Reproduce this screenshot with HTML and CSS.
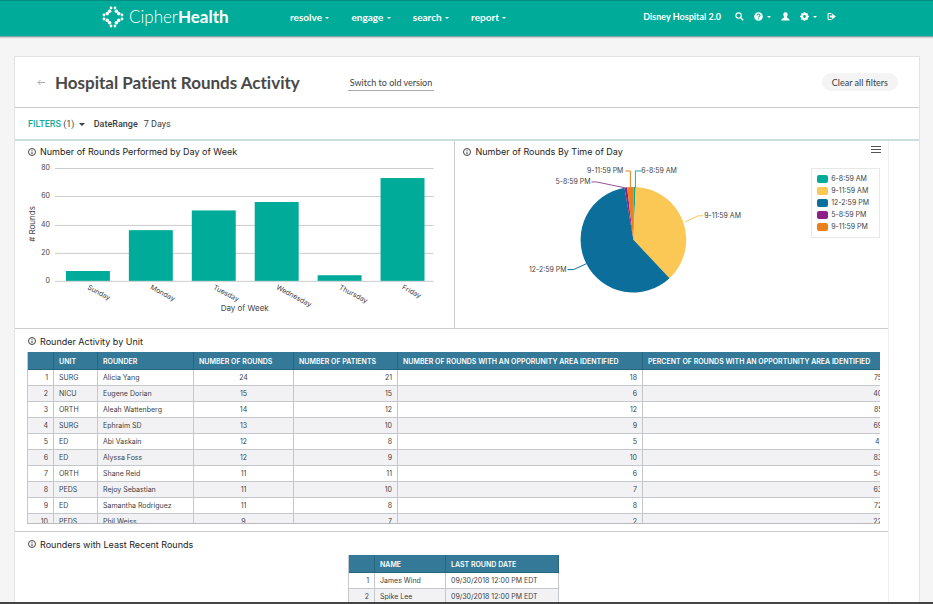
FILE: index.html
```
<!DOCTYPE html>
<html lang="en">
<head>
    <meta charset="UTF-8">
    <meta name="viewport" content="width=device-width, initial-scale=1.0">
    <title>Hospital Patient Rounds Activity</title>
    <link rel="stylesheet" href="styles.css">
</head>
<body>
    <header class="topbar">
        <a href="#" class="logo">
            <svg width="22" height="22" viewBox="0 0 22 22" fill="#fff">
                <g id="arm">
                    <circle cx="9" cy="2" r="1.4"/>
                    <circle cx="13" cy="2" r="1.4"/>
                    <circle cx="7.6" cy="5.300" r="1.800"/>
                    <circle cx="14.4" cy="5.300" r="1.800"/>
                </g>
                <use href="#arm" transform="rotate(90 11 11)"/>
                <use href="#arm" transform="rotate(180 11 11)"/>
                <use href="#arm" transform="rotate(270 11 11)"/>
            </svg>
            <span>Cipher<b>Health</b></span>
        </a>
        <nav class="menu">
            <a href="#">resolve <i class="caret"></i></a>
            <a href="#">engage <i class="caret"></i></a>
            <a href="#">search <i class="caret"></i></a>
            <a href="#">report <i class="caret"></i></a>
        </nav>
        <div class="tools">
            <span class="site">Disney Hospital 2.0</span>
            <a href="#" aria-label="Search"><svg width="9" height="9" viewBox="0 0 9 9"><circle cx="3.6" cy="3.6" r="2.7" fill="none" stroke="#fff" stroke-width="1.1"/><path d="M5.6 5.6L8.2 8.2" stroke="#fff" stroke-width="1.5"/></svg></a>
            <a href="#" aria-label="Help"><svg width="9" height="9" viewBox="0 0 9 9"><circle cx="4.5" cy="4.5" r="4.3" fill="#fff"/><path d="M3 3.5C3 1.600 6 1.600 6 3.400C6 4.400 4.600 4.300 4.600 5.500M4.600 6.200V7.200" fill="none" stroke="#00ac99" stroke-width="1.1"/></svg><i class="caret"></i></a>
            <a href="#" aria-label="Account"><svg width="9" height="9" viewBox="0 0 9 9"><path d="M4.500 .3C6.300 .3 6.700 1.500 6.600 2.900C6.500 4 5.900 4.500 5.900 5.300C5.900 6.300 8.700 6.300 8.700 8.500H.3C.3 6.300 3.100 6.300 3.100 5.300C3.100 4.500 2.500 4 2.400 2.900C2.300 1.500 2.700 .3 4.500 .3Z" fill="#fff"/></svg></a>
            <a href="#" aria-label="Settings"><svg width="9" height="9" viewBox="0 0 9 9"><circle cx="4.500" cy="4.500" r="2.500" fill="none" stroke="#fff" stroke-width="2.200"/><path d="M4.500 0V2M4.500 7V9M0 4.500H2M7 4.500H9M1.500 1.500L2.600 2.600M6.400 6.400L7.500 7.500M1.500 7.500L2.600 6.400M6.400 2.600L7.500 1.500" stroke="#fff" stroke-width="1.600"/></svg><i class="caret"></i></a>
            <a href="#" aria-label="Log out"><svg width="9" height="9" viewBox="0 0 9 9"><path d="M4.500 1.500H1.100V7.500H4.500" fill="none" stroke="#fff"/><path d="M2.800 3.500H5.200V1.500L8.800 4.500L5.200 7.500V5.500H2.800Z" fill="#fff"/></svg></a>
        </div>
    </header>

    <main class="card">
        <div class="title-row">
            <a href="#" class="back" aria-label="Back"><svg width="8" height="7" viewBox="0 0 8 7"><path d="M8 3.500H1M3.500 1L1 3.500L3.500 6" fill="none" stroke="#aaa"/></svg></a>
            <h1>Hospital Patient Rounds Activity</h1>
            <a href="#" class="switch">Switch to old version</a>
            <button type="button" class="clear">Clear all filters</button>
        </div>
        <div class="filters">
            <button type="button" class="filter-toggle"><b>FILTERS</b> (1) <i class="caret"></i></button>
            <span class="filter-name">DateRange</span>
            <span>7 Days</span>
        </div>

        <div class="dashboard">
            <div class="charts">
                <section class="panel">
                    <h2><svg class="info" width="8" height="8" viewBox="0 0 8 8"><circle cx="4" cy="4" r="3.500"/><path d="M4 1.800V2.700M4 3.500V6.200"/></svg>Number of Rounds Performed by Day of Week</h2>
                    <svg class="chart" id="bars" viewBox="0 0 440 166"></svg>
                </section>
                <section class="panel">
                    <h2><svg class="info" width="8" height="8" viewBox="0 0 8 8"><circle cx="4" cy="4" r="3.500"/><path d="M4 1.800V2.700M4 3.500V6.200"/></svg>Number of Rounds By Time of Day</h2>
                    <button type="button" class="burger" aria-label="Chart menu"><span></span><span></span><span></span></button>
                    <svg class="chart" viewBox="0 0 434 166">
                        <g id="slices"></g>
                        <g class="leaders">
                            <path d="M181 26V9H187" stroke="#2aa5b5"/>
                            <path d="M231 60L244 54H249" stroke="#fbc755"/>
                            <path d="M132 102L119 108H113" stroke="#0c6f9b"/>
                            <path d="M171 26L142 20H137" stroke="#9c4f98"/>
                            <path d="M176 26V9H171" stroke="#eb7f19"/>
                        </g>
                        <g class="labels">
                            <text x="187" y="11">6-8:59 AM</text>
                            <text x="250" y="56">9-11:59 AM</text>
                            <text x="112" y="110" text-anchor="end">12-2:59 PM</text>
                            <text x="136" y="22" text-anchor="end">5-8:59 PM</text>
                            <text x="169" y="11" text-anchor="end">9-11:59 PM</text>
                        </g>
                    </svg>
                    <ul class="legend">
                        <li><i class="teal"></i>6-8:59 AM</li>
                        <li><i class="yellow"></i>9-11:59 AM</li>
                        <li><i class="blue"></i>12-2:59 PM</li>
                        <li><i class="purple"></i>5-8:59 PM</li>
                        <li><i class="orange"></i>9-11:59 PM</li>
                    </ul>
                </section>
            </div>

            <section class="panel wide">
                <h2><svg class="info" width="8" height="8" viewBox="0 0 8 8"><circle cx="4" cy="4" r="3.500"/><path d="M4 1.800V2.700M4 3.500V6.200"/></svg>Rounder Activity by Unit</h2>
                <div class="table-wrap">
                    <table class="activity">
                        <colgroup>
                            <col class="c-num"><col class="c-unit"><col class="c-name"><col class="c-rounds"><col class="c-patients"><col class="c-area"><col>
                        </colgroup>
                        <thead>
                            <tr><th></th><th>UNIT</th><th>ROUNDER</th><th>NUMBER OF ROUNDS</th><th>NUMBER OF PATIENTS</th><th>NUMBER OF ROUNDS WITH AN OPPORUNITY AREA IDENTIFIED</th><th>PERCENT OF ROUNDS WITH AN OPPORTUNITY AREA IDENTIFIED</th></tr>
                        </thead>
                        <tbody>
                            <tr><td>1</td><td>SURG</td><td>Alicia Yang</td><td>24</td><td>21</td><td>18</td><td>75.0%</td></tr>
                            <tr><td>2</td><td>NICU</td><td>Eugene Dorian</td><td>15</td><td>15</td><td>6</td><td>40.0%</td></tr>
                            <tr><td>3</td><td>ORTH</td><td>Aleah Wattenberg</td><td>14</td><td>12</td><td>12</td><td>85.7%</td></tr>
                            <tr><td>4</td><td>SURG</td><td>Ephraim SD</td><td>13</td><td>10</td><td>9</td><td>69.2%</td></tr>
                            <tr><td>5</td><td>ED</td><td>Abi Vaskain</td><td>12</td><td>8</td><td>5</td><td>41.7%</td></tr>
                            <tr><td>6</td><td>ED</td><td>Alyssa Foss</td><td>12</td><td>9</td><td>10</td><td>83.3%</td></tr>
                            <tr><td>7</td><td>ORTH</td><td>Shane Reid</td><td>11</td><td>11</td><td>6</td><td>54.5%</td></tr>
                            <tr><td>8</td><td>PEDS</td><td>Rejoy Sebastian</td><td>11</td><td>10</td><td>7</td><td>63.6%</td></tr>
                            <tr><td>9</td><td>ED</td><td>Samantha Rodriguez</td><td>11</td><td>8</td><td>8</td><td>72.7%</td></tr>
                            <tr><td>10</td><td>PEDS</td><td>Phil Weiss</td><td>9</td><td>7</td><td>2</td><td>22.2%</td></tr>
                        </tbody>
                    </table>
                </div>
            </section>

            <section class="panel wide last">
                <h2><svg class="info" width="8" height="8" viewBox="0 0 8 8"><circle cx="4" cy="4" r="3.500"/><path d="M4 1.800V2.700M4 3.500V6.200"/></svg>Rounders with Least Recent Rounds</h2>
                <div class="recent-wrap">
                    <table class="recent">
                        <colgroup><col class="c-num"><col class="c-person"><col></colgroup>
                        <thead>
                            <tr><th></th><th>NAME</th><th>LAST ROUND DATE</th></tr>
                        </thead>
                        <tbody>
                            <tr><td>1</td><td>James Wind</td><td>09/30/2018 12:00 PM EDT</td></tr>
                            <tr><td>2</td><td>Spike Lee</td><td>09/30/2018 12:00 PM EDT</td></tr>
                        </tbody>
                    </table>
                </div>
            </section>
        </div>
    </main>

    <script src="charts.js"></script>
</body>
</html>
```
FILE: styles.css
```
* {
    box-sizing: border-box;
}
body {
    margin: 0;
    height: 100vh;
    display: flex;
    flex-direction: column;
    overflow: hidden;
    background-color: #f5f5f5;
    border-bottom: 2px solid #444;
    font-family: Inter, Roboto, sans-serif;
    font-size: 8px;
    color: #3a3f45;
}
a {
    color: inherit;
    text-decoration: none;
}
button {
    border: none;
    background: none;
    padding: 0;
    font: inherit;
    color: inherit;
    cursor: pointer;
}
.caret {
    display: inline-block;
    border: 2px solid transparent;
    border-top-color: currentColor;
    border-bottom: none;
    vertical-align: middle;
}

/* top bar */
.topbar {
    flex: none;
    display: flex;
    align-items: center;
    height: 37px;
    padding: 0 97px 4px 102px;
    background-color: #00ac99;
    border-top: 1px solid #008c80;
    border-bottom: 1px solid #7fa8a3;
    box-shadow: 0 1px 1px rgba(0,0,0,0.15);
    color: #fff;
    font-family: Lato, sans-serif;
    font-size: 10px;
    font-weight: bold;
}
.logo {
    display: flex;
    align-items: center;
    gap: 5px;
    width: 188px;
    font-size: 17px;
    font-weight: 300;
}
.logo b {
    font-weight: bold;
}
.menu {
    display: flex;
    gap: 22px;
}
.menu .caret {
    margin-left: 1px;
}
.tools {
    display: flex;
    align-items: center;
    gap: 10px;
    margin-left: auto;
}
.tools a {
    display: flex;
    align-items: center;
    gap: 4px;
}
.site {
    font-size: 9px;
    margin-right: 4px;
}

/* card */
.card {
    flex: 1;
    min-height: 0;
    display: flex;
    flex-direction: column;
    margin: 19px 13px 0 14px;
    background-color: #fff;
    border: 1px solid #e3e3e3;
    border-bottom: none;
    overflow: hidden;
}
.title-row {
    flex: none;
    display: flex;
    align-items: center;
    height: 51px;
    padding: 0 21px 0 22px;
    border-bottom: 1px solid #ccc;
    font-family: Lato, sans-serif;
    font-size: 9px;
}
.back {
    display: flex;
    margin-right: 10px;
}
h1 {
    margin: 0;
    font-size: 17px;
    font-variant-ligatures: none;
    color: #484848;
}
.switch {
    margin-left: 48px;
    padding: 4px 2px 2px;
    border-bottom: 1px solid #aaa;
}
.clear {
    margin-left: auto;
    height: 18px;
    padding: 0 10px;
    border-radius: 9px;
    background-color: #f4f4f4;
}
.filters {
    flex: none;
    display: flex;
    align-items: center;
    gap: 6px;
    height: 33px;
    padding-left: 13px;
    border-bottom: 2px solid #cbdddc;
    font-family: Roboto, sans-serif;
    font-size: 9px;
}
.filter-toggle b {
    color: #16a998;
    font-weight: 500;
}
.filter-toggle .caret {
    border-width: 3px 3px 0;
    margin: 0 3px 0 2px;
}
.filter-name {
    font-weight: 500;
}

/* dashboard */
.dashboard {
    flex: 1;
    margin-right: 30px;
    border-right: 1px solid #eee;
    overflow: hidden;
}
.charts {
    display: grid;
    grid-template-columns: 440fr 434fr;
}
.panel {
    position: relative;
    min-width: 0;
    border-bottom: 1px solid #ccc;
}
.charts .panel + .panel {
    border-left: 1px solid #ccc;
}
.panel.wide {
    padding-top: 2px;
}
.panel.last {
    border-bottom: none;
}
h2 {
    display: flex;
    align-items: center;
    gap: 4px;
    height: 21px;
    margin: 0;
    padding-left: 13px;
    font-size: 9px;
    font-weight: normal;
    color: #222;
}
.charts .panel + .panel h2 {
    padding-left: 8px;
}
.info {
    fill: none;
    stroke: #444;
    stroke-width: 1;
}
.chart {
    display: block;
    width: 100%;
    font-size: 7px;
    fill: #444;
}
.chart .axis-title {
    font-size: 8px;
}
.chart .grid {
    stroke: #ccc;
}
.leaders {
    fill: none;
}
.burger {
    position: absolute;
    top: 5px;
    right: 7px;
    display: grid;
    gap: 2px;
}
.burger span {
    width: 10px;
    height: 1px;
    background-color: #555;
}
.legend {
    position: absolute;
    top: 27px;
    right: 8px;
    margin: 0;
    padding: 4px 10px 4px 5px;
    border: 1px solid #e8e8e8;
    list-style: none;
    font-size: 7px;
}
.legend li {
    display: flex;
    align-items: center;
    gap: 3px;
    height: 12px;
    line-height: 12px;
}
.legend i {
    width: 11px;
    height: 8px;
    border-radius: 2px;
}
.teal { background-color: #00ac99; }
.yellow { background-color: #fbc755; }
.blue { background-color: #0c6f9b; }
.purple { background-color: #8e2089; }
.orange { background-color: #eb7f19; }

/* tables */
.table-wrap {
    height: 172px;
    margin: 0 8px 7px 12px;
    overflow: hidden;
    border-bottom: 1px solid #bbb;
}
table {
    table-layout: fixed;
    border-collapse: separate;
    border-spacing: 0;
    border-left: 1px solid #c4c7cc;
    font-size: 7px;
}
.activity {
    width: 102%;
}
th, td {
    height: 16px;
    padding: 0 5px;
    border-right: 1px solid #c4c7cc;
    border-bottom: 1px solid #c4c7cc;
    text-align: left;
    white-space: nowrap;
}
th {
    height: 18px;
    padding-top: 3px;
    background-color: #347998;
    border-color: #286680;
    color: #fff;
    font-weight: 600;
}
tbody tr:nth-child(even) {
    background-color: #f2f2f5;
}
td:first-child,
.activity td:nth-child(n+5) {
    text-align: right;
}
.activity td:nth-child(4) {
    text-align: center;
}
.activity td:last-child {
    padding-right: 1px;
}
.c-num { width: 26px; }
.c-unit { width: 44px; }
.c-name { width: 96px; }
.c-rounds { width: 100px; }
.c-patients { width: 104px; }
.c-area { width: 245px; }
.c-person { width: 71px; }
.recent-wrap {
    padding: 0 8px 0 12px;
}
.recent {
    width: 211px;
    margin: 0 auto;
}
```
FILE: charts.js
```
const days = [
    ['Sunday', 7],
    ['Monday', 36],
    ['Tuesday', 50],
    ['Wednesday', 56],
    ['Thursday', 4],
    ['Friday', 73]
];
const base = 119;
const unit = 1.41;
let bars = '';

for (let v = 0; v <= 80; v += 20) {
    const y = Math.round(base - v * unit) + 0.5;
    bars += `<path class="grid" d="M40 ${y}H419"/>`;
    bars += `<text x="35" y="${y + 2}" text-anchor="end">${v}</text>`;
}
days.forEach(([name, value], i) => {
    const x = 51 + i * 63;
    const h = value * unit;
    bars += `<rect x="${x}" y="${base - h}" width="44" height="${h}" fill="#00ac99"/>`;
    bars += `<text x="${x + 21}" y="127" transform="rotate(28 ${x + 21} 127)">${name}</text>`;
});
bars += '<text class="axis-title" x="230" y="149" text-anchor="middle">Day of Week</text>';
bars += '<text class="axis-title" x="20" y="62" text-anchor="middle" transform="rotate(-90 20 62)"># Rounds</text>';
document.getElementById('bars').innerHTML = bars;

// share of the circle for each time slot, clockwise from the top
const slots = [
    [0.007, '#00ac99'],
    [0.373, '#fbc755'],
    [0.593, '#0c6f9b'],
    [0.008, '#8e2089'],
    [0.019, '#eb7f19']
];
const cx = 179;
const cy = 78;
const r = 53;
let start = 0;
let pie = '';

function point(share) {
    const a = share * 2 * Math.PI;
    return `${cx + r * Math.sin(a)} ${cy - r * Math.cos(a)}`;
}
slots.forEach(([share, color]) => {
    const end = start + share;
    pie += `<path fill="${color}" d="M${cx} ${cy}L${point(start)}A${r} ${r} 0 ${share > 0.5 ? 1 : 0} 1 ${point(end)}Z"/>`;
    start = end;
});
document.getElementById('slices').innerHTML = pie;
```
